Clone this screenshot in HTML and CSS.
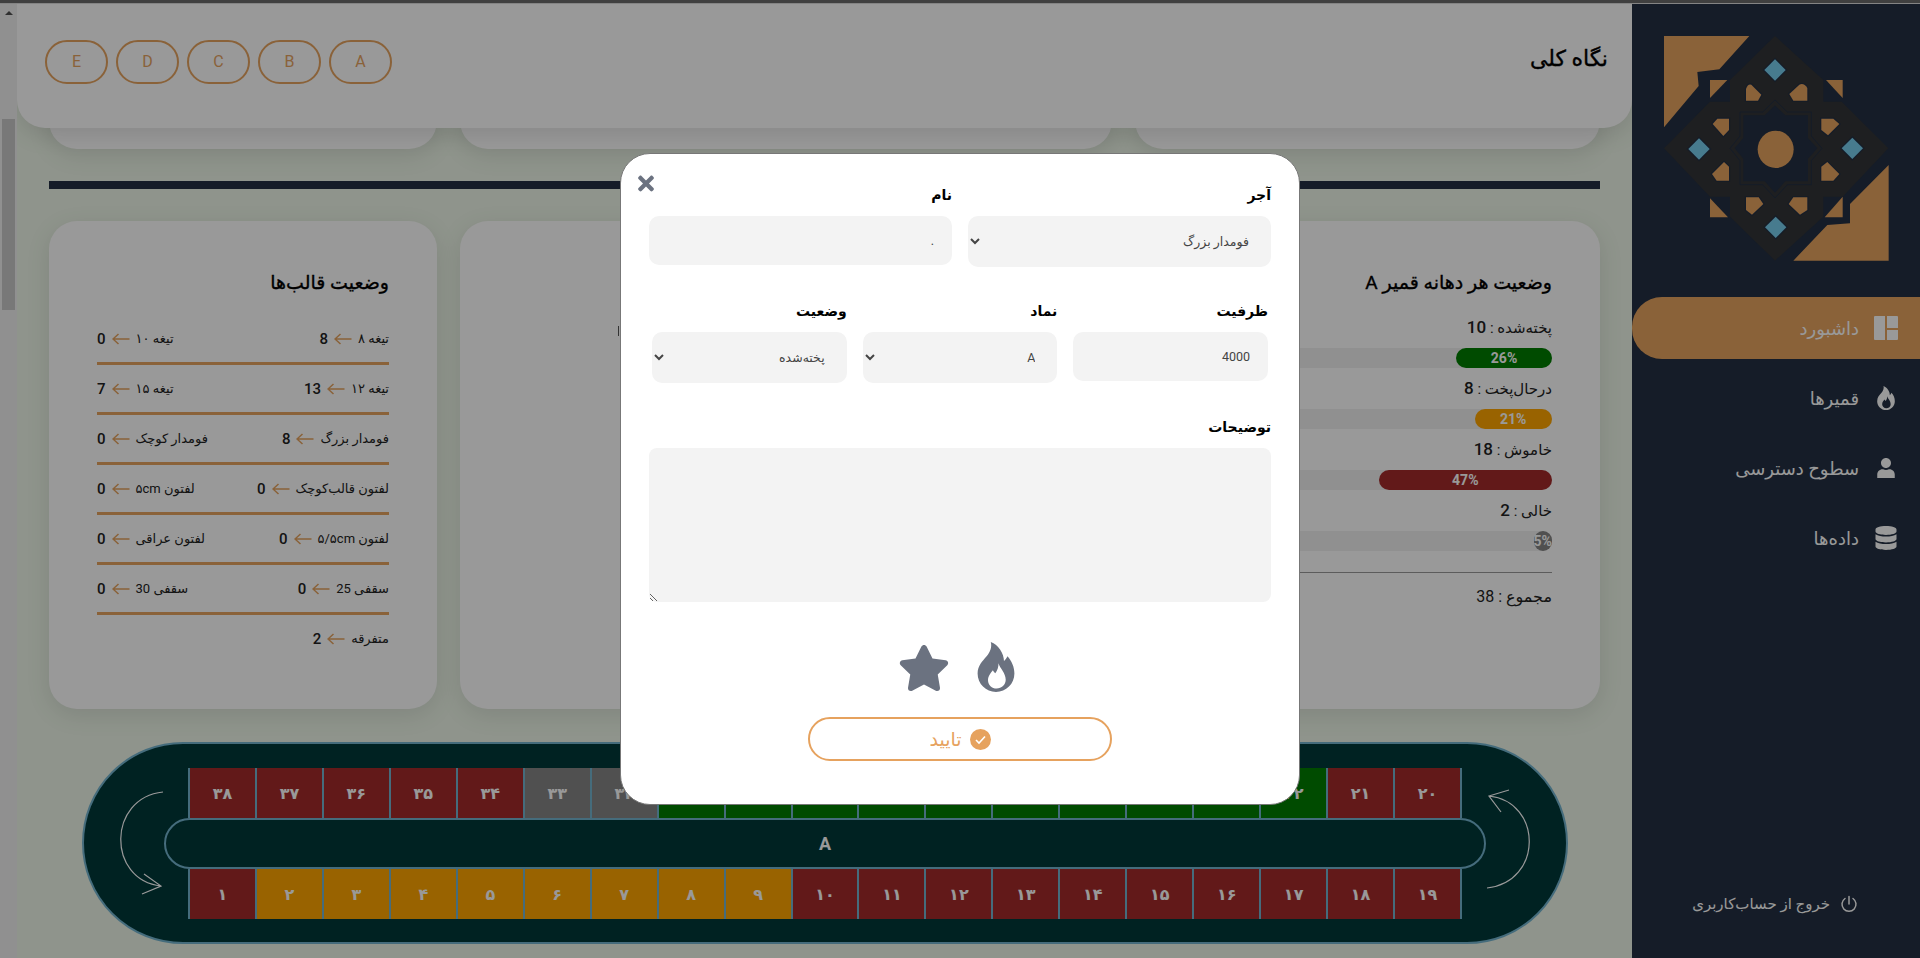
FILE: index.html
```html
<!DOCTYPE html>
<html lang="fa" dir="rtl">
<head>
    <meta charset="UTF-8">
    <title>داشبورد</title>
    <link rel="stylesheet" href="styles.css">
</head>
<body>
    <svg class="icon-defs" aria-hidden="true">
        <symbol id="i-fire" viewBox="52 37 106 144"><path fill-rule="evenodd" d="M90 37C112 45 128 70 128 92 132 88 136 82 138 78 150 92 158 108 158 128 158 158 134 181 105 181 76 181 52 158 52 128 52 105 66 92 78 78 88 66 94 52 90 37ZM112 98C116 112 133 125 133 146 133 161 121 171 107 171 93 171 82 161 82 147 82 134 90 126 96 118 98 122 100 125 103 127 109 118 113 108 112 98Z"/></symbol>
        <symbol id="i-arrow" viewBox="0 0 18 12"><path d="M17.5 6H1M6.5 1 1 6l5.500 5" fill="none" stroke="currentColor" stroke-width="1.500"/></symbol>
    </svg>

    <div class="browser-line"></div>

    <div class="app">
        <!-- Sidebar -->
        <aside class="sidebar">
            <svg class="logo" viewBox="132 108 675 675">
                <path class="tile" d="M132 108H388L298 208 232 216 236 258 132 382Z"/>
                <path class="tile" d="M806 495V782H520L622 675 690 670 690 612Z"/>
                <path class="tile" d="M270 240H322L270 294Z"/>
                <path class="tile" d="M618 240H668V294Z"/>
                <path class="tile" d="M270 595 324 652H270Z"/>
                <path class="tile" d="M668 590V652H614Z"/>
                <path class="frame" d="M465 108 610 240V305H665L805 445 668 590H610V650L465 782 330 650V590H270L132 445 270 305H330V240Z"/>
                <path class="star-line" d="M465 300 502 336H574V408L606 445 574 482V554H502L465 594 428 554H360V482L330 445 360 408V336H428Z"/>
                <path class="star" d="M465 316 496 346H564V414L592 445 564 476V544H496L465 578 434 544H370V476L344 445 370 414V346H434Z"/>
                <ellipse class="tile" cx="467" cy="448" rx="54" ry="56"/>
                <g class="gem">
                    <path d="M465 178 497 210 465 242 433 210Z"/>
                    <path d="M237 415 269 447 237 479 205 447Z"/>
                    <path d="M697 413 729 445 697 477 665 445Z"/>
                    <path d="M467 650 499 682 467 714 435 682Z"/>
                </g>
                <g class="petal">
                    <path d="M378 302V266Q384 250 394 254L424 284 414 302Z"/>
                    <path d="M562 302V264Q552 248 538 254L508 282 520 302Z"/>
                    <path d="M327 356V390L310 408 278 372 292 356Z"/>
                    <path d="M604 356V390L624 406 658 372 640 356Z"/>
                    <path d="M327 542V500L312 486 276 522 290 542Z"/>
                    <path d="M604 542V500L622 486 658 522 640 542Z"/>
                    <path d="M378 592V630L396 644 430 612 416 592Z"/>
                    <path d="M562 592V630L540 644 506 612 520 592Z"/>
                </g>
            </svg>

            <nav class="side-nav">
                <a class="side-link active" href="#">
                    <svg class="side-icon" viewBox="0 0 24 24"><path d="M0 1Q0 0 1 0H11V24H1Q0 24 0 23ZM13 0H23Q24 0 24 1V12H13ZM13 14H24V23Q24 24 23 24H13Z"/></svg>
                    داشبورد
                </a>
                <a class="side-link" href="#">
                    <svg class="side-icon"><use href="#i-fire"/></svg>
                    قمیرها
                </a>
                <a class="side-link" href="#">
                    <svg class="side-icon small" viewBox="0 0 448 512"><path d="M224 256c70.700 0 128-57.300 128-128S294.700 0 224 0 96 57.300 96 128s57.300 128 128 128zm89.600 32h-16.700c-22.200 10.200-46.900 16-72.900 16s-50.600-5.800-72.900-16h-16.700C60.200 288 0 348.200 0 422.400V512h448v-89.600c0-74.200-60.200-134.400-134.400-134.400z"/></svg>
                    سطوح دسترسی
                </a>
                <a class="side-link" href="#">
                    <svg class="side-icon" viewBox="0 0 448 512"><path d="M448 73.143v45.714C448 159.143 347.667 192 224 192S0 159.143 0 118.857V73.143C0 32.857 100.333 0 224 0s224 32.857 224 73.143zM448 176v102.857C448 319.143 347.667 352 224 352S0 319.143 0 278.857V176c48.125 33.143 136.208 48.572 224 48.572S399.874 209.143 448 176zm0 160v102.857C448 479.143 347.667 512 224 512S0 479.143 0 438.857V336c48.125 33.143 136.208 48.572 224 48.572S399.874 369.143 448 336z"/></svg>
                    داده‌ها
                </a>
            </nav>

            <a class="logout" href="#">
                <svg viewBox="0 0 18 18"><path d="M9 1.500V9M5 3.500a7 7 0 1 0 8 0" fill="none" stroke="currentColor" stroke-width="1.500" stroke-linecap="round"/></svg>
                خروج از حساب‌کاربری
            </a>
        </aside>

        <!-- Main Content -->
        <main class="content">
            <header class="top-panel">
                <h1>نگاه کلی</h1>
                <div class="kiln-tabs">
                    <button class="kiln-tab">A</button>
                    <button class="kiln-tab">B</button>
                    <button class="kiln-tab">C</button>
                    <button class="kiln-tab">D</button>
                    <button class="kiln-tab">E</button>
                </div>
            </header>

            <div class="page">
                <div class="card-row top-row">
                    <div class="card"></div>
                    <div class="card"></div>
                    <div class="card"></div>
                </div>

                <div class="divider"></div>

                <div class="card-row main-row">
                    <section class="card stats-card">
                        <h2>وضعیت هر دهانه قمیر A</h2>
                        <div class="stat-label">پخته‌شده : <b>10</b></div>
                        <div class="bar"><div class="bar-fill green" style="width: 26%">26%</div></div>
                        <div class="stat-label">درحال‌پخت : <b>8</b></div>
                        <div class="bar"><div class="bar-fill orange" style="width: 21%">21%</div></div>
                        <div class="stat-label">خاموش : <b>18</b></div>
                        <div class="bar"><div class="bar-fill red" style="width: 47%">47%</div></div>
                        <div class="stat-label">خالی : <b>2</b></div>
                        <div class="bar"><div class="bar-fill grey" style="width: 5%">5%</div></div>
                        <div class="stat-total">مجموع : 38</div>
                    </section>

                    <section class="card middle-card">
                        <div class="middle-mark"></div>
                    </section>

                    <section class="card mold-card">
                        <h2>وضعیت قالب‌ها</h2>
                        <div class="mold-row">
                            <span class="mold">تیغه ۸ <svg><use href="#i-arrow"/></svg> <b>8</b></span>
                            <span class="mold">تیغه ۱۰ <svg><use href="#i-arrow"/></svg> <b>0</b></span>
                        </div>
                        <div class="mold-row">
                            <span class="mold">تیغه ۱۲ <svg><use href="#i-arrow"/></svg> <b>13</b></span>
                            <span class="mold">تیغه ۱۵ <svg><use href="#i-arrow"/></svg> <b>7</b></span>
                        </div>
                        <div class="mold-row">
                            <span class="mold">فومدار بزرگ <svg><use href="#i-arrow"/></svg> <b>8</b></span>
                            <span class="mold">فومدار کوچک <svg><use href="#i-arrow"/></svg> <b>0</b></span>
                        </div>
                        <div class="mold-row">
                            <span class="mold">لفتون قالب‌کوچک <svg><use href="#i-arrow"/></svg> <b>0</b></span>
                            <span class="mold">لفتون ۵cm <svg><use href="#i-arrow"/></svg> <b>0</b></span>
                        </div>
                        <div class="mold-row">
                            <span class="mold">لفتون ۵/۵cm <svg><use href="#i-arrow"/></svg> <b>0</b></span>
                            <span class="mold">لفتون عراقی <svg><use href="#i-arrow"/></svg> <b>0</b></span>
                        </div>
                        <div class="mold-row">
                            <span class="mold">سقفی 25 <svg><use href="#i-arrow"/></svg> <b>0</b></span>
                            <span class="mold">سقفی 30 <svg><use href="#i-arrow"/></svg> <b>0</b></span>
                        </div>
                        <div class="mold-row">
                            <span class="mold">متفرقه <svg><use href="#i-arrow"/></svg> <b>2</b></span>
                        </div>
                    </section>
                </div>

                <!-- Kiln board -->
                <section class="kiln" dir="ltr">
                    <svg class="turn turn-left" viewBox="0 0 50 110"><path d="M46 4C-10 10-10 92 44 98M27 86 44 98 25 106" fill="none" stroke="currentColor"/></svg>
                    <svg class="turn turn-right" viewBox="0 0 50 110"><path d="M4 100C60 94 60 14 6 8M26 2 6 8 18 24" fill="none" stroke="currentColor"/></svg>
                    <div class="cells">
                        <div class="cell red">۳۸</div><div class="cell red">۳۷</div><div class="cell red">۳۶</div><div class="cell red">۳۵</div><div class="cell red">۳۴</div><div class="cell grey">۳۳</div><div class="cell grey">۳۲</div><div class="cell green">۳۱</div><div class="cell green">۳۰</div><div class="cell green">۲۹</div><div class="cell green">۲۸</div><div class="cell green">۲۷</div><div class="cell green">۲۶</div><div class="cell green">۲۵</div><div class="cell green">۲۴</div><div class="cell green">۲۳</div><div class="cell green">۲۲</div><div class="cell red">۲۱</div><div class="cell red">۲۰</div>
                    </div>
                    <div class="kiln-name">A</div>
                    <div class="cells">
                        <div class="cell red">۱</div><div class="cell orange">۲</div><div class="cell orange">۳</div><div class="cell orange">۴</div><div class="cell orange">۵</div><div class="cell orange">۶</div><div class="cell orange">۷</div><div class="cell orange">۸</div><div class="cell orange">۹</div><div class="cell red">۱۰</div><div class="cell red">۱۱</div><div class="cell red">۱۲</div><div class="cell red">۱۳</div><div class="cell red">۱۴</div><div class="cell red">۱۵</div><div class="cell red">۱۶</div><div class="cell red">۱۷</div><div class="cell red">۱۸</div><div class="cell red">۱۹</div>
                    </div>
                </section>
            </div>
        </main>

        <div class="scrollbar">
            <span class="scroll-arrow"></span>
            <span class="scroll-thumb"></span>
        </div>
    </div>

    <!-- Edit dialog -->
    <div class="overlay">
        <form class="modal">
            <svg class="modal-close" viewBox="0 0 352 512"><path d="M242.720 256l100.070-100.070c12.280-12.280 12.280-32.190 0-44.480l-22.240-22.240c-12.280-12.280-32.190-12.280-44.480 0L176 189.280 75.930 89.210c-12.280-12.280-32.190-12.280-44.480 0L9.210 111.450c-12.280 12.280-12.280 32.190 0 44.480L109.280 256 9.210 356.070c-12.280 12.280-12.280 32.190 0 44.480l22.240 22.240c12.280 12.280 32.200 12.280 44.480 0L176 322.720l100.070 100.070c12.280 12.280 32.200 12.280 44.480 0l22.240-22.240c12.280-12.280 12.280-32.190 0-44.480L242.720 256z"/></svg>

            <div class="field-row two">
                <label class="field">آجر
                    <select><option>فومدار بزرگ</option></select>
                </label>
                <label class="field">نام
                    <input class="short" type="text" value=".">
                </label>
            </div>

            <div class="field-row three">
                <label class="field">ظرفیت
                    <input class="short" type="text" value="4000">
                </label>
                <label class="field">نماد
                    <select><option>A</option></select>
                </label>
                <label class="field">وضعیت
                    <select><option>پخته‌شده</option></select>
                </label>
            </div>

            <label class="field notes">توضیحات
                <textarea></textarea>
            </label>

            <div class="modal-icons">
                <svg class="fire"><use href="#i-fire"/></svg>
                <svg class="star-icon" viewBox="0 0 576 512"><path d="M259.300 17.800L194 150.200 47.900 171.500c-26.200 3.800-36.700 36.100-17.700 54.600l105.700 103-25 145.500c-4.500 26.300 23.200 46 46.400 33.700L288 439.600l130.700 68.700c23.200 12.200 50.900-7.400 46.400-33.700l-25-145.500 105.700-103c19-18.500 8.500-50.800-17.700-54.600L382 150.200 316.700 17.800c-11.700-23.600-45.600-23.900-57.400 0z"/></svg>
            </div>

            <button class="confirm" type="button">
                <svg viewBox="0 0 21 21"><circle cx="10.500" cy="10.500" r="10.500" fill="currentColor"/><path d="M6 11l3 3 6-6.500" fill="none" stroke="#fff" stroke-width="1.600"/></svg>
                تایید
            </button>
        </form>
    </div>
</body>
</html>
```

FILE: styles.css
```css
/* General */
* {
    box-sizing: border-box;
}

html, body {
    height: 100%;
}

body {
    margin: 0;
    overflow: hidden;
    background-color: #eef7e9;
    color: #000;
    font-family: Roboto, "DejaVu Sans", sans-serif;
}

h1, h2 {
    margin: 0;
    font-weight: 400;
    -webkit-text-stroke: 0.35px #000;
}

.icon-defs {
    display: none;
}

.browser-line {
    height: 4px;
    background-color: #6c6c6c;
    border-bottom: 1px solid #ddd;
}

.app {
    display: flex;
    height: 954px;
}

/* Sidebar */
.sidebar {
    display: flex;
    flex-direction: column;
    flex: none;
    width: 288px;
    background-color: #232f43;
    color: #fff;
}

.logo {
    display: block;
    width: 225px;
    height: 225px;
    margin: 32px 31px 0 32px;
}

.logo .tile, .logo .petal {
    fill: #e6a35f;
}

.logo .frame {
    fill: #323437;
}

.logo .star-line {
    fill: none;
    stroke: #232f43;
    stroke-width: 3;
}

.logo .star {
    fill: #232f43;
}

.logo .gem path {
    fill: #77cded;
    stroke: #232f43;
    stroke-width: 7;
    paint-order: stroke;
}

.logo .petal path {
    stroke: #232f43;
    stroke-width: 7;
    paint-order: stroke;
}

.side-nav {
    display: flex;
    flex-direction: column;
    margin-top: 36px;
}

.side-link {
    display: flex;
    align-items: center;
    gap: 15px;
    height: 62px;
    margin-bottom: 8px;
    padding-right: 22px;
    color: #fff;
    font-size: 18px;
    text-decoration: none;
}

.side-link.active {
    background-color: #e6a35f;
    border-radius: 30px 0 0 30px;
}

.side-icon {
    flex: none;
    width: 24px;
    height: 24px;
    fill: #fff;
}

.side-icon.small {
    height: 20px;
}

.logout {
    display: flex;
    align-items: center;
    gap: 10px;
    margin-top: auto;
    margin-bottom: 45px;
    padding-right: 62px;
    color: #fff;
    font-size: 15px;
    text-decoration: none;
}

.logout svg {
    width: 18px;
    height: 18px;
}

/* Main */
.content {
    flex: 1;
    min-width: 0;
    overflow: hidden;
}

.top-panel {
    position: relative;
    z-index: 2;
    display: flex;
    align-items: center;
    justify-content: space-between;
    height: 124px;
    padding: 0 24px 9px 28px;
    background-color: #fff;
    border-radius: 0 0 28px 28px;
    box-shadow: 0 6px 24px rgba(0, 0, 0, 0.12);
}

.top-panel h1 {
    margin-bottom: 7px;
    font-size: 22px;
}

.kiln-tabs {
    display: flex;
    gap: 8px;
}

.kiln-tab {
    width: 63px;
    height: 44px;
    padding: 0;
    background: none;
    border: 2px solid #e6a35f;
    border-radius: 22px;
    color: #e6a35f;
    font-family: inherit;
    font-size: 16px;
}

.page {
    padding: 0 32px;
}

.card-row {
    display: grid;
    grid-template-columns: 465px 1fr 388px;
    gap: 23px;
}

.card {
    background-color: #fff;
    border-radius: 28px;
    box-shadow: 0 6px 24px rgba(0, 0, 0, 0.1);
}

.top-row {
    height: 60px;
    margin-top: -39px;
}

.divider {
    height: 8px;
    margin-top: 32px;
    background-color: #232f43;
}

.main-row {
    height: 488px;
    margin-top: 32px;
}

.card h2 {
    font-size: 19px;
    line-height: 24px;
}

/* Stats card */
.stats-card {
    padding: 50px 48px 0;
}

.stat-label {
    height: 24px;
    margin-top: 8px;
    margin-bottom: 9px;
    font-size: 15px;
    line-height: 24px;
    color: #222;
}

.stats-card h2 + .stat-label {
    margin-top: 20px;
}

.stat-label b {
    font-size: 17px;
    font-weight: 500;
}

.bar {
    height: 20px;
    background-color: #f0f0f0;
    border-radius: 10px;
}

.bar-fill {
    height: 100%;
    border-radius: 10px;
    color: #fff;
    font-size: 14px;
    font-weight: 700;
    line-height: 20px;
    text-align: center;
    white-space: nowrap;
}

.bar-fill.green { background-color: #007d00; }
.bar-fill.orange { background-color: #ffa600; }
.bar-fill.red { background-color: #a32b2b; }
.bar-fill.grey { background-color: #858585; }

.stat-total {
    margin-top: 21px;
    padding-top: 12px;
    border-top: 1px solid #999;
    font-size: 16px;
    line-height: 24px;
    color: #222;
}

/* Middle card, its content is behind the dialog */
.middle-mark {
    width: 1px;
    height: 10px;
    margin: 105px 493px 0 0;
    background-color: #555;
}

/* Molds card */
.mold-card {
    padding: 50px 48px 0;
}

.mold-card h2 {
    margin-bottom: 20px;
}

.mold-row {
    display: flex;
    align-items: center;
    justify-content: space-between;
    height: 50px;
    border-bottom: 3px solid #e6a35f;
}

.mold-row:last-child {
    border-bottom: none;
    padding-bottom: 3px;
}

.mold {
    display: flex;
    align-items: center;
    gap: 6px;
    font-size: 13px;
    color: #222;
}

.mold svg {
    width: 18px;
    height: 12px;
    color: #e6a35f;
}

.mold b {
    font-size: 15px;
    font-weight: 500;
}

/* Kiln board */
.kiln {
    position: relative;
    height: 202px;
    margin: 33px 32px 0 33px;
    padding: 24px 104px;
    background-color: #00393a;
    border: 2px solid #73b4cf;
    border-radius: 101px;
}

.cells {
    display: grid;
    grid-template-columns: repeat(19, 1fr);
    height: 50px;
    border-left: 2px solid #73b4cf;
}

.cell {
    display: flex;
    align-items: center;
    justify-content: center;
    border-right: 2px solid #73b4cf;
    color: #fff;
    font-size: 16px;
    font-weight: 700;
}

.cell.red { background-color: #a32b2b; }
.cell.green { background-color: #007d00; }
.cell.orange { background-color: #ffa600; }
.cell.grey { background-color: #858585; }

.kiln-name {
    height: 51px;
    margin: 0 -24px;
    border: 2px solid #73b4cf;
    border-radius: 26px;
    color: #fff;
    font-size: 18px;
    font-weight: 700;
    line-height: 47px;
    text-align: center;
}

.turn {
    position: absolute;
    top: 44px;
    width: 50px;
    height: 110px;
    color: #fff;
    stroke-width: 1.2;
}

.turn-left {
    left: 33px;
}

.turn-right {
    right: 33px;
}

/* Scrollbar */
.scrollbar {
    position: relative;
    flex: none;
    width: 17px;
    background-color: #f1f1f1;
}

.scroll-arrow {
    position: absolute;
    top: 7px;
    left: 5px;
    border: 4px solid transparent;
    border-top: none;
    border-bottom: 4px solid #505050;
}

.scroll-thumb {
    position: absolute;
    top: 115px;
    left: 2px;
    width: 13px;
    height: 191px;
    background-color: #c9c9c9;
}

/* Dialog */
.overlay {
    position: fixed;
    inset: 0;
    z-index: 10;
    display: flex;
    align-items: center;
    justify-content: center;
    background-color: rgba(0, 0, 0, 0.4);
}

.modal {
    position: relative;
    width: 680px;
    height: 652px;
    padding: 31px 28px 0;
    background-color: #fff;
    border: 1px solid #777;
    border-radius: 30px;
}

.modal-close {
    position: absolute;
    top: 18px;
    left: 17px;
    width: 16px;
    height: 23px;
    fill: #6b7280;
}

.field-row {
    display: grid;
    gap: 16px;
    align-items: start;
    margin-bottom: 34px;
}

.field-row.two {
    grid-template-columns: 1fr 1fr;
}

.field-row.three {
    grid-template-columns: repeat(3, 1fr);
    padding: 0 3px;
}

.field {
    display: flex;
    flex-direction: column;
    gap: 11px;
    font-size: 14px;
    font-weight: 700;
    line-height: 20px;
}

.field select, .field input, .field textarea {
    width: 100%;
    background-color: #f3f3f3;
    border: none;
    border-radius: 10px;
    color: #444;
    font-family: inherit;
    font-size: 12.5px;
    font-weight: 400;
}

.field select {
    height: 51px;
    padding: 0 18px 0 10px;
}

.field input {
    height: 49px;
    padding: 0 18px;
}

.field textarea {
    display: block;
    height: 154px;
    border-radius: 8px;
}

.modal-icons {
    display: flex;
    justify-content: center;
    align-items: flex-end;
    gap: 27px;
    height: 52px;
    margin-top: 38px;
    padding-right: 8px;
}

.modal-icons .fire {
    width: 38px;
    height: 50px;
    fill: #6b7280;
}

.modal-icons .star-icon {
    width: 52px;
    height: 48px;
    fill: #6b7280;
}

.confirm {
    display: flex;
    align-items: center;
    justify-content: center;
    gap: 8px;
    width: 304px;
    height: 44px;
    margin: 25px auto 0;
    background: none;
    border: 2px solid #e6a25e;
    border-radius: 22px;
    color: #e6a25e;
    font-family: inherit;
    font-size: 19px;
}

.confirm svg {
    width: 21px;
    height: 21px;
}
```
